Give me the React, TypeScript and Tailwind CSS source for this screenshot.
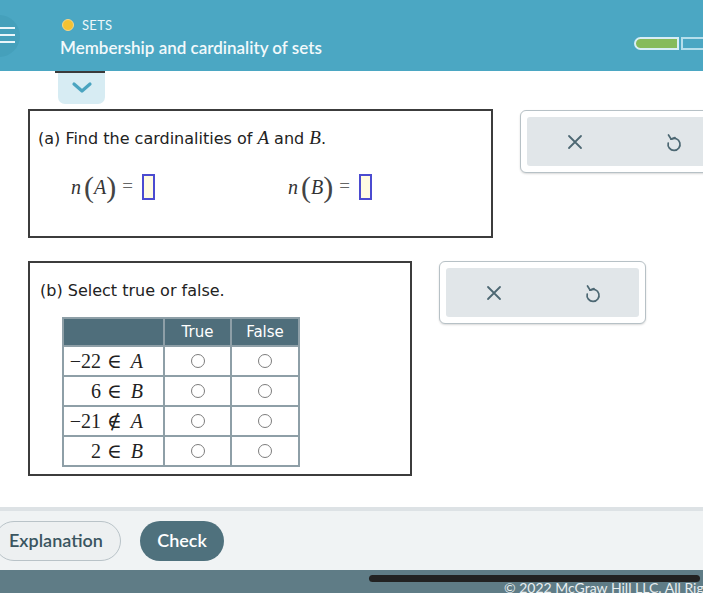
import React from "react"

const serif = { fontFamily: '"Liberation Serif", "DejaVu Serif", serif' }

function XIcon() {
  return (
    <svg width="18" height="18" viewBox="0 0 18 18" fill="none" stroke="#4d6873" strokeWidth="1.8" strokeLinecap="round">
      <path d="M3 3 L15 15 M15 3 L3 15" />
    </svg>
  )
}

function UndoIcon() {
  return (
    <svg width="18" height="20" viewBox="0 0 18 20" fill="none" stroke="#4d6873" strokeWidth="1.7" strokeLinecap="round" strokeLinejoin="round">
      <path d="M7 7.2 A6 6 0 1 1 4.2 11" />
      <path d="M4.5 3 L7.2 7.2 L11 5.6" />
    </svg>
  )
}

function ButtonGroup() {
  return (
    <div className="w-[207px] shrink-0 rounded-[6px] border border-[#b7c1c6] bg-white p-[6px] shadow-[0_1px_2px_rgba(0,0,0,0.15)]">
      <div className="flex h-[49px] items-center rounded-[3px] bg-[#e1e6e9]">
        <div className="ml-[38px] flex w-[20px] justify-center">
          <XIcon />
        </div>
        <div className="ml-[78px] flex w-[20px] justify-center">
          <UndoIcon />
        </div>
      </div>
    </div>
  )
}

function AnswerBox() {
  return <span className="inline-block h-[26px] w-[13px] border-2 border-[#4b4bd0] bg-[#fffbe2]" />
}

function Cardinality({ set }: { set: string }) {
  return (
    <div className="flex items-center" style={serif}>
      <span className="text-[20px] italic text-[#333]">n</span>
      <span className="ml-[3px] text-[30px] font-light leading-none text-[#444]">(</span>
      <span className="text-[20px] italic text-[#333]">{set}</span>
      <span className="text-[30px] font-light leading-none text-[#444]">)</span>
      <span className="ml-[6px] mr-[9px] text-[19px] text-[#666]">=</span>
      <AnswerBox />
    </div>
  )
}

function Radio() {
  return <span className="inline-block h-[14px] w-[14px] rounded-full border border-[#7d7d7d]" />
}

const rows = [
  { num: "−22", rel: "∈", set: "A" },
  { num: "6", rel: "∈", set: "B" },
  { num: "−21", rel: "∉", set: "A" },
  { num: "2", rel: "∈", set: "B" },
]

export default function App() {
  return (
    <div className="relative h-[593px] w-[703px] overflow-hidden bg-white" style={{ fontFamily: '"DejaVu Sans", Verdana, sans-serif' }}>
      {/* top bar */}
      <div className="relative flex h-[71px] items-center bg-[#4ba7c3]" style={{ fontFamily: 'Lato, "Open Sans", sans-serif' }}>
        <div className="absolute left-[-22px] top-[15px] h-[42px] w-[42px] rounded-full bg-[#45a0bb]" />
        <div className="absolute left-0 top-[27px] flex w-[15px] flex-col gap-[5px]">
          <span className="h-[2px] w-full bg-[#eaf6fa]" />
          <span className="h-[2px] w-full bg-[#eaf6fa]" />
          <span className="h-[2px] w-full bg-[#eaf6fa]" />
        </div>
        <div className="ml-[60px] mt-[5px] flex flex-col">
          <div className="flex items-center gap-[8px] pl-[2px]">
            <span className="h-[12px] w-[12px] rounded-full border border-[#f6d78a] bg-[#f3c233]" />
            <span className="text-[13px] tracking-[0.3px] text-[#eef7fa]">SETS</span>
          </div>
          <div className="text-[17px] font-semibold text-[#f2f9fb]">Membership and cardinality of sets</div>
        </div>
        <div className="absolute left-[634px] top-[37px] flex items-center gap-[2px]">
          <div className="h-[13px] w-[45px] rounded-l-full border-2 border-[#d8eef5] bg-[#86bb5b]" />
          <div className="h-[13px] w-[40px] border-2 border-[#b6dfec] bg-[#4ba7c3]" />
        </div>
      </div>

      {/* chevron tab */}
      <div className="relative ml-[58px] flex h-[33px] w-[47px] items-center justify-center rounded-b-[7px] bg-[#d7ecf3]">
        <div className="absolute left-[-3px] top-0 h-[2px] w-[50px] bg-[#3a3a3a]" />
        <svg width="22" height="13" viewBox="0 0 22 13" fill="none" stroke="#4aa4c0" strokeWidth="3.2" strokeLinecap="round" strokeLinejoin="round">
          <path d="M3 3 L11 10 L19 3" />
        </svg>
      </div>

      {/* part a */}
      <div className="mt-[5px] flex items-start pl-[28px]">
        <div className="h-[129px] w-[465px] shrink-0 border-2 border-[#3c3c3c] px-[8px] pt-[13px]">
          <div className="text-[16px] text-[#222]">
            (a) Find the cardinalities of <span className="text-[19px] italic" style={serif}>A</span> and{" "}
            <span className="text-[19px] italic" style={serif}>B</span>.
          </div>
          <div className="mt-[19px] flex">
            <div className="ml-[33px] w-[217px]">
              <Cardinality set="A" />
            </div>
            <Cardinality set="B" />
          </div>
        </div>
        <div className="ml-[27px] mt-[1px] shrink-0">
          <ButtonGroup />
        </div>
      </div>

      {/* part b */}
      <div className="mt-[23px] flex items-start pl-[28px]">
        <div className="h-[215px] w-[384px] shrink-0 border-2 border-[#3c3c3c] pl-[10px] pt-[16px]">
          <div className="text-[16px] text-[#222]">(b) Select true or false.</div>
          <table className="ml-[22px] mt-[14px] border-collapse">
            <thead>
              <tr className="h-[28px] bg-[#4f6e7b] text-[15px] font-normal text-white">
                <th className="w-[101px] border-2 border-[#8e9fa7] border-b-0" />
                <th className="w-[67px] border-2 border-[#8e9fa7] border-b-0 font-normal">True</th>
                <th className="w-[68px] border-2 border-[#8e9fa7] border-b-0 font-normal">False</th>
              </tr>
            </thead>
            <tbody>
              {rows.map((r) => (
                <tr key={r.num + r.set} className="h-[30px]">
                  <td className="border-2 border-[#8e9fa7] pr-[20px] text-[20px] leading-none text-[#222]" style={serif}>
                    <div className="flex items-baseline justify-end">
                      <span>{r.num}</span>
                      <span className="ml-[6px]">{r.rel}</span>
                      <span className="ml-[9px] italic">{r.set}</span>
                    </div>
                  </td>
                  <td className="border-2 border-[#8e9fa7] text-center">
                    <div className="flex justify-center">
                      <Radio />
                    </div>
                  </td>
                  <td className="border-2 border-[#8e9fa7] text-center">
                    <div className="flex justify-center">
                      <Radio />
                    </div>
                  </td>
                </tr>
              ))}
            </tbody>
          </table>
        </div>
        <div className="ml-[27px] shrink-0">
          <ButtonGroup />
        </div>
      </div>

      {/* footer actions */}
      <div className="mt-[31px] h-[4px] bg-[#dde2e5]" />
      <div className="flex h-[59px] items-center gap-[19px] bg-[#f0f3f4]" style={{ fontFamily: 'Lato, "Open Sans", sans-serif' }}>
        <button className="-ml-[6px] h-[40px] w-[127px] shrink-0 rounded-full border border-[#b9c3c8] bg-[#edf0f1] pl-[14px] text-left text-[18px] font-semibold text-[#3a5560]">
          Explanation
        </button>
        <button className="h-[40px] w-[84px] shrink-0 rounded-full bg-[#4f717d] text-[18px] font-semibold text-white">Check</button>
      </div>
      <div className="relative h-[23px] bg-[#5f7c86]">
        <div className="absolute left-[369px] top-[5px] h-[7px] w-[331px] rounded-full bg-[#222]" />
        <div className="absolute left-[504px] top-[7px] whitespace-nowrap text-[14px] text-[#e8eef0]" style={{ fontFamily: 'Lato, "Open Sans", sans-serif' }}>
          © 2022 McGraw Hill LLC. All Rights Reserved.
        </div>
      </div>
    </div>
  )
}
